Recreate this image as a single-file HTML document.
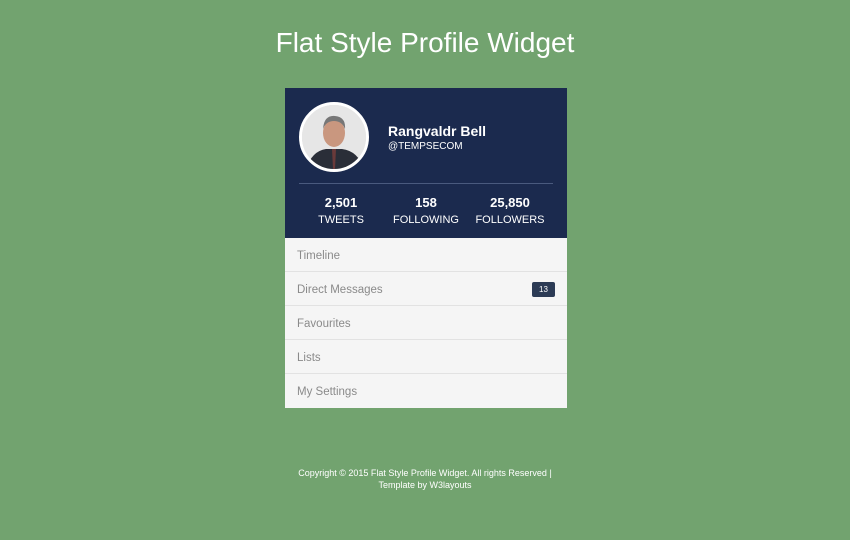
<!DOCTYPE html>
<html><head><meta charset="utf-8"><style>
*{margin:0;padding:0;box-sizing:border-box}
body{width:850px;height:540px;background:#72a36f;font-family:"Liberation Sans",sans-serif;position:relative;overflow:hidden}
h1{position:absolute;top:27px;left:0;width:850px;text-align:center;color:#fff;font-weight:normal;font-size:28px;letter-spacing:0}
.card{position:absolute;left:285px;top:88px;width:282px}
.top{background:#1b2a4e;height:150px;position:relative}
.av{position:absolute;left:14px;top:14px;width:70px;height:70px;border-radius:50%;border:3px solid #fff;background:#ddd;overflow:hidden}
.name{position:absolute;left:103px;top:35px;color:#fff;font-weight:bold;font-size:14px}
.handle{position:absolute;left:103px;top:53px;color:#fff;font-size:10px}
.hr{position:absolute;left:14px;right:14px;top:95px;height:1px;background:#4a5a7e}
.st{position:absolute;top:107px;width:80px;margin-left:-40px;color:#fff;text-align:center}
.st b{display:block;font-size:13px}
.st span{font-size:11px}
.item{background:#f5f5f5;height:34px;border-bottom:1px solid #e2e2e2;color:#8a8a8a;font-size:11.5px;line-height:36px;padding-left:12px;position:relative}
.item:last-child{border-bottom:none}
.badge{position:absolute;right:12px;top:10px;background:#2c3b55;color:#fff;font-size:8px;line-height:15px;height:15px;width:23px;text-align:center;border-radius:2px}
.foot{position:absolute;top:467px;left:0;width:850px;text-align:center;color:#fff;font-size:9px;line-height:12px}
</style></head><body>
<h1>Flat Style Profile Widget</h1>
<div class="card">
<div class="top">
<div class="av"><svg width="64" height="64" viewBox="0 0 64 64"><rect width="64" height="64" fill="#e6e6e6"/><path d="M4 64 Q10 46 24 44 L40 44 Q56 46 62 64Z" fill="#2a2e38"/><ellipse cx="32" cy="28" rx="11" ry="14" fill="#c9977f"/><path d="M21 24 Q22 10 33 11 Q44 12 43 24 Q40 16 32 16 Q24 16 21 24Z" fill="#777"/><path d="M30 44 L34 44 L33 64 L31 64Z" fill="#6a3a3a"/></svg></div>
<div class="name">Rangvaldr Bell</div>
<div class="handle">@TEMPSECOM</div>
<div class="hr"></div>
<div class="st" style="left:56px"><b>2,501</b><span>TWEETS</span></div>
<div class="st" style="left:141px"><b>158</b><span>FOLLOWING</span></div>
<div class="st" style="left:225px"><b>25,850</b><span>FOLLOWERS</span></div>
</div>
<div class="item">Timeline</div>
<div class="item">Direct Messages<div class="badge">13</div></div>
<div class="item">Favourites</div>
<div class="item">Lists</div>
<div class="item">My Settings</div>
</div>
<div class="foot">Copyright © 2015 Flat Style Profile Widget. All rights Reserved |<br>Template by W3layouts</div>
</body></html>
